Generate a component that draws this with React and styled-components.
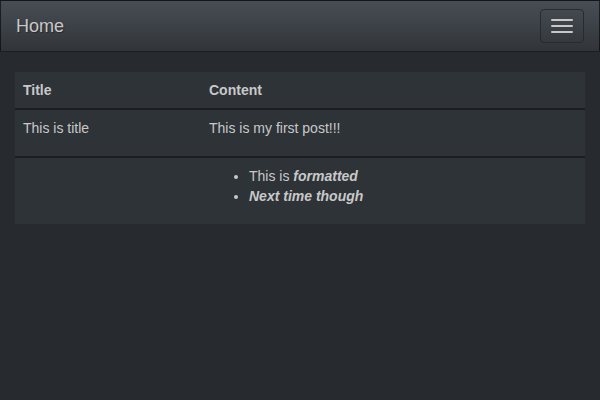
import React from "react"
import styled, { createGlobalStyle } from 'styled-components';

const GlobalStyle = createGlobalStyle`
  html, body {
    margin: 0;
    padding: 0;
    background-color: #272b30;
  }
  body {
    font-family: "Liberation Sans", Arial, sans-serif;
    font-size: 14px;
    line-height: 20px;
    color: #c8c8c8;
  }
`

const Navbar = styled.nav`
  display: flex;
  align-items: flex-start;
  justify-content: space-between;
  min-height: 50px;
  border: 1px solid rgba(0, 0, 0, 0.6);
  background-image: linear-gradient(#484e55, #3a3f44 60%, #313539);
  margin-bottom: 20px;
  text-shadow: 1px 1px 1px rgba(0, 0, 0, 0.3);
`

const Brand = styled.a`
  font-size: 18px;
  line-height: 20px;
  padding: 15px;
  color: #c8c8c8;
  text-decoration: none;
`

const Toggle = styled.button`
  display: flex;
  flex-direction: column;
  gap: 4px;
  margin: 8px 15px 0 0;
  padding: 9px 10px;
  background: transparent;
  border: 1px solid #272b30;
  border-radius: 4px;
  cursor: pointer;
`

const IconBar = styled.span`
  display: block;
  width: 22px;
  height: 2px;
  border-radius: 1px;
  background-color: #c8c8c8;
`

const Container = styled.div`
  padding: 0 15px;
`

const Table = styled.table`
  width: 100%;
  border-collapse: collapse;
  border-spacing: 0;
  background-color: #2e3338;
  margin-bottom: 20px;
`

const Th = styled.th`
  text-align: left;
  font-weight: bold;
  padding: 8px;
  border-bottom: 2px solid #1c1e22;
  width: ${({w}) => w || "auto"};
`

const Td = styled.td`
  padding: 8px;
  vertical-align: top;
  border-top: ${({first}) => first ? "0" : "2px solid #1c1e22"};
`

const Para = styled.p`
  margin: 0 0 10px;
`

const List = styled.ul`
  margin: 0 0 10px;
  padding-left: 40px;
`

const App = () => {
  return (
    <>
      <GlobalStyle />
      <Navbar>
        <Brand href="#">Home</Brand>
        <Toggle aria-label="Toggle navigation">
          <IconBar />
          <IconBar />
          <IconBar />
        </Toggle>
      </Navbar>
      <Container>
        <Table>
          <thead>
            <tr>
              <Th w="170px">Title</Th>
              <Th>Content</Th>
            </tr>
          </thead>
          <tbody>
            <tr>
              <Td first>This is title</Td>
              <Td first><Para>This is my first post!!!</Para></Td>
            </tr>
            <tr>
              <Td></Td>
              <Td>
                <List>
                  <li>This is <strong><em>formatted</em></strong></li>
                  <li><strong><em>Next time though</em></strong></li>
                </List>
              </Td>
            </tr>
          </tbody>
        </Table>
      </Container>
    </>
  )
}

export default App
